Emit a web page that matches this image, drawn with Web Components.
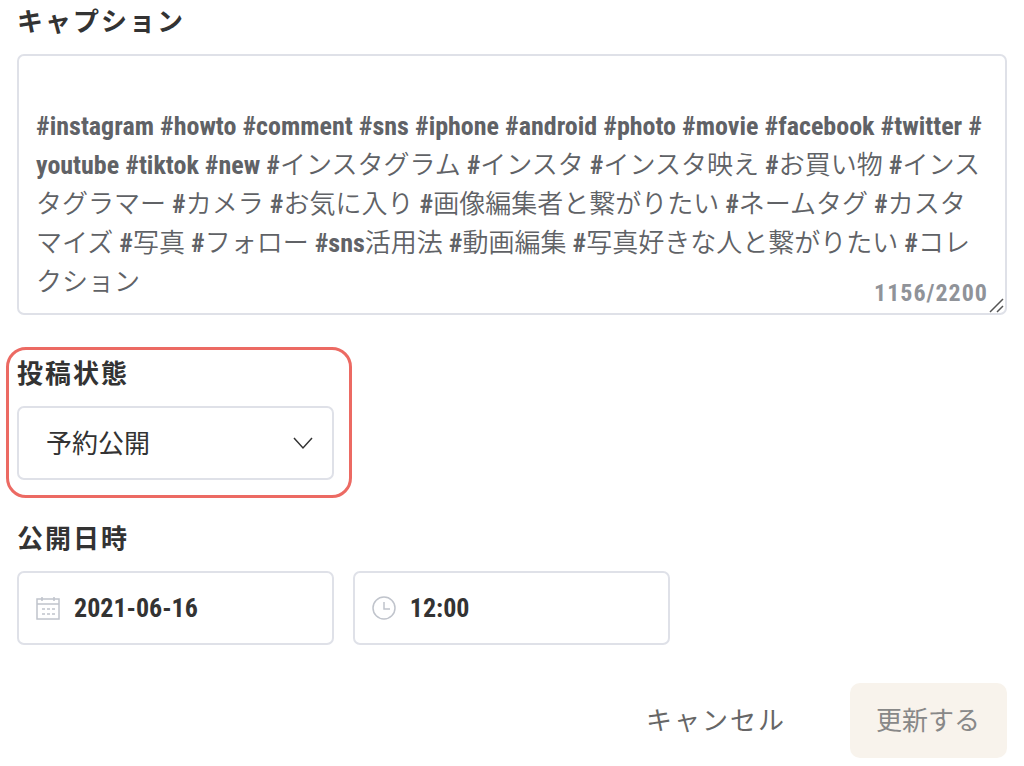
<!DOCTYPE html>
<html lang="ja">
<head>
<meta charset="utf-8">
<meta name="viewport" content="width=device-width, initial-scale=1">
<title>投稿の編集</title>
<style>
  body {
    margin: 0;
    background: #fff;
    color: #333;
    font: 400 26px/40px "Noto Sans CJK JP", sans-serif;
  }
</style>
</head>
<body>
<post-editor>
  <caption-field label="キャプション" count="1156" max="2200">
#instagram #howto #comment #sns #iphone #android #photo #movie #facebook #twitter #
youtube #tiktok #new #インスタグラム #インスタ #インスタ映え #お買い物 #インス
タグラマー #カメラ #お気に入り #画像編集者と繋がりたい #ネームタグ #カスタ
マイズ #写真 #フォロー #sns活用法 #動画編集 #写真好きな人と繋がりたい #コレ
クション</caption-field>
  <status-field label="投稿状態" value="予約公開" highlighted></status-field>
  <schedule-field label="公開日時" date="2021-06-16" time="12:00"></schedule-field>
  <action-button slot="actions" variant="text">キャンセル</action-button>
  <action-button slot="actions" variant="primary">更新する</action-button>
</post-editor>

<script>
const sharedStyle = `
  * { box-sizing: border-box; }
  :host { display: block; }
  label {
    display: block;
    margin-bottom: 15px;
    font-weight: 700;
    line-height: 38px;
    letter-spacing: 2px;
  }
  input, select, textarea {
    display: block;
    width: 100%;
    margin: 0;
    border: 2px solid #dfe1e8;
    border-radius: 7px;
    background: #fff;
    color: #333;
    font: inherit;
    outline: none;
  }
  input:focus, select:focus, textarea:focus { border-color: #409eff; }
  .control { position: relative; }
`;

const icons = {
  calendar: `
    <rect x="1" y="3" width="22" height="20"/>
    <path d="M1 8h22M6 1v4M18 1v4M6 13h3M11 13h3M16 13h3M6 18h3M11 18h3M16 18h3"/>`,
  clock: `
    <circle cx="12" cy="12" r="11"/>
    <path d="M12 6v7h6"/>`,
};

class PostEditor extends HTMLElement {
  constructor() {
    super();
    this.attachShadow({ mode: "open" }).innerHTML = `
      <style>
        :host { display: block; padding: 1px 17px 9px; }
        form { display: grid; gap: 38px; }
        .actions {
          display: flex;
          justify-content: flex-end;
          gap: 37px;
        }
      </style>
      <form>
        <slot></slot>
        <div class="actions"><slot name="actions"></slot></div>
      </form>
    `;
  }
}

class CaptionField extends HTMLElement {
  constructor() {
    super();
    this.attachShadow({ mode: "open" });
  }

  connectedCallback() {
    this.shadowRoot.innerHTML = `
      <style>
        ${sharedStyle}
        textarea {
          height: 261px;
          padding: 12px 17px 8px;
          overflow: hidden;
          resize: none;
          color: #606266;
          font: 700 26px/39px "Roboto Condensed", "Noto Sans CJK JP DemiLight", "Noto Sans CJK JP", sans-serif;
          font-synthesis: none;
        }
        .count {
          position: absolute;
          right: 19px;
          bottom: 7px;
          color: #909399;
          font: 700 24px/30px "Roboto Condensed", sans-serif;
          letter-spacing: 1px;
        }
        svg { position: absolute; right: 3px; bottom: 2px; }
      </style>
      <label for="caption">${this.getAttribute("label")}</label>
      <div class="control">
        <textarea id="caption"></textarea>
        <span class="count">${this.getAttribute("count")}/${this.getAttribute("max")}</span>
        <svg width="15" height="15" fill="none" stroke="#555" stroke-width="1.5">
          <path d="M1 14 14 1M8 14l6-6"/>
        </svg>
      </div>
    `;
    // the light DOM text starts with a newline, which is kept as an empty first line
    this.shadowRoot.querySelector("textarea").value = this.textContent;
  }
}

class StatusField extends HTMLElement {
  constructor() {
    super();
    this.attachShadow({ mode: "open" });
  }

  connectedCallback() {
    this.shadowRoot.innerHTML = `
      <style>
        ${sharedStyle}
        :host { position: relative; width: 32%; }
        :host([highlighted])::before {
          content: "";
          position: absolute;
          inset: -6px -18px -18px -11px;
          border: 3px solid #ec6a63;
          border-radius: 20px;
          pointer-events: none;
        }
        select {
          height: 74px;
          padding: 0 56px 2px 27px;
          appearance: none;
        }
        svg {
          position: absolute;
          right: 20px;
          top: 30px;
          pointer-events: none;
        }
      </style>
      <label for="status">${this.getAttribute("label")}</label>
      <div class="control">
        <select id="status"><option>${this.getAttribute("value")}</option></select>
        <svg width="22" height="14" fill="none" stroke="#333" stroke-width="1.5">
          <path d="M2 2l9 10 9-10"/>
        </svg>
      </div>
    `;
  }
}

class ScheduleField extends HTMLElement {
  constructor() {
    super();
    this.attachShadow({ mode: "open" });
  }

  connectedCallback() {
    this.shadowRoot.innerHTML = `
      <style>
        ${sharedStyle}
        .row { display: flex; gap: 19px; }
        .control { width: 32%; }
        input {
          height: 74px;
          padding: 0 16px 0 55px;
          font: 700 26px/40px "Roboto Condensed", sans-serif;
        }
        svg {
          position: absolute;
          left: 19px;
          top: 25px;
          pointer-events: none;
        }
      </style>
      <label for="date">${this.getAttribute("label")}</label>
      <div class="row">
        ${this.renderInput("date", "calendar", "日付")}
        ${this.renderInput("time", "clock", "時刻")}
      </div>
    `;
  }

  renderInput(name, icon, title) {
    return `
      <div class="control">
        <input id="${name}" type="text" aria-label="${title}" value="${this.getAttribute(name)}">
        <svg width="24" height="24" fill="none" stroke="#c0c4cc" stroke-width="1.5">${icons[icon]}</svg>
      </div>
    `;
  }
}

class ActionButton extends HTMLElement {
  constructor() {
    super();
    this.attachShadow({ mode: "open" }).innerHTML = `
      <style>
        :host { display: block; }
        button {
          height: 75px;
          padding: 0 27px 4px 26px;
          border: 0;
          border-radius: 10px;
          background: none;
          color: #666;
          font: inherit;
          letter-spacing: 2px;
          cursor: pointer;
        }
        :host([variant="primary"]) button {
          background: #f8f3ec;
          color: #888;
          letter-spacing: 0;
        }
      </style>
      <button type="button"><slot></slot></button>
    `;
  }
}

customElements.define("post-editor", PostEditor);
customElements.define("caption-field", CaptionField);
customElements.define("status-field", StatusField);
customElements.define("schedule-field", ScheduleField);
customElements.define("action-button", ActionButton);
</script>
</body>
</html>
